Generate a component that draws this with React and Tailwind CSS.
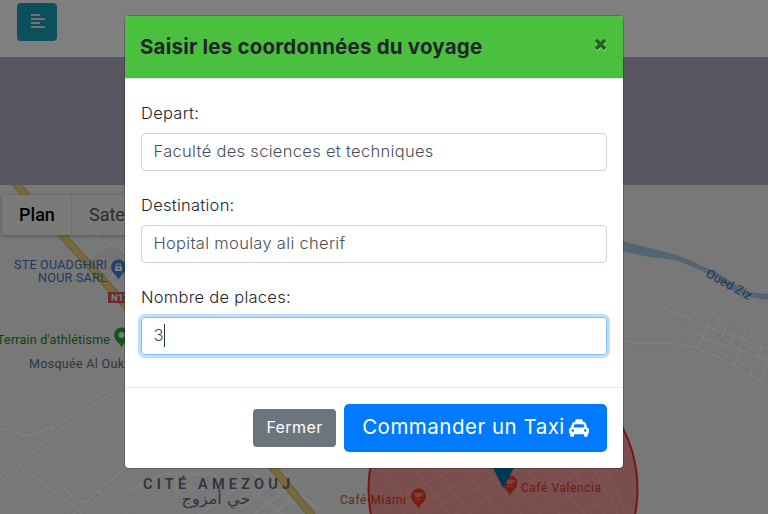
import { FaTaxi } from "react-icons/fa";

function Pin({ x, y, color, children }) {
  return (
    <g transform={`translate(${x} ${y})`}>
      <path d="M0 11C-1 6 -7.5 4 -7.5 -2A7.5 7.5 0 0 1 7.5 -2C7.5 4 1 6 0 11Z" fill={color} />
      {children}
    </g>
  );
}

function Cup() {
  return (
    <g fill="none" stroke="#f3c9b8" strokeWidth="1.1">
      <path d="M-3 -5H2V-3A2 2 0 0 1 0 -1H-1A2 2 0 0 1 -3 -3Z" fill="#f3c9b8" />
      <path d="M2 -4.5H4V-2.5H2M-3.5 1.5H3" />
    </g>
  );
}

const streets = [
  "M0 428L27 436L54 427L125 386",
  "M54 427L46 440L19 466L0 483",
  "M19 466L76 508L84 516",
  "M72 516L98 491L128 465",
  "M98 491L130 516",
  "M64 489L72 496L84 502",
  "M93 185L84 200",
  "M97 233V240L108 241L125 252",
  "M108 280L125 266",
];

const eastStreets = [
  "M623 340L635 343H675L697 348L718 357L735 366L768 385",
  "M664 308L690 319L715 330L745 340L768 350",
  "M688 305L678 326",
  "M696 309L687 330L715 343L745 351L768 361",
  "M716 308L697 349",
  "M722 314L712 338",
  "M730 318L721 338",
  "M739 321L728 347",
  "M747 324L735 364",
  "M762 345L750 374",
  "M768 360L761 380",
];

const southStreets = [
  "M168 474H215V488M176 472V500M190 472V492M203 472V490M170 488H205",
  "M240 508L284 474M252 516L297 480M270 516L305 490M255 474L312 516M245 486L285 516M262 468L318 508",
  "M125 492L168 472M200 514L240 485",
];

const circleStreets = [
  "M378 465L418 514M400 450L450 514M425 455L470 514",
  "M385 505L470 460M402 514L492 465M425 514L500 475M455 514L520 482",
  "M460 466L500 514M480 462L522 514M510 480L540 514M528 470L560 514",
  "M550 475L585 514M570 468L605 514M590 462L618 514M605 468L627 514",
  "M530 498L585 470M540 514L605 478M575 514L622 492",
];

function MapView() {
  return (
    <svg className="block h-[329px] w-full font-[Roboto]" viewBox="0 185 768 329">
      <defs>
        <clipPath id="zone">
          <circle cx="503" cy="489" r="135" />
        </clipPath>
      </defs>
      <rect y="185" width="768" height="329" fill="#f0f0f0" />
      <path d="M88 264Q100 245 125 248V278L108 282Z" fill="#e9e9e9" />
      <g fill="none" stroke="#e4e4e4" strokeWidth="4.4" strokeLinejoin="round" strokeLinecap="round">
        {streets.concat(eastStreets).map((d) => <path key={d} d={d} />)}
      </g>
      <g fill="none" stroke="#ffffff" strokeWidth="3" strokeLinejoin="round" strokeLinecap="round">
        {streets.concat(eastStreets, southStreets).map((d) => <path key={d} d={d} strokeOpacity=".75" />)}
      </g>
      <g fill="none">
        <path d="M14 182L90 266L130 310" stroke="#d3bd72" strokeWidth="8" />
        <path d="M14 182L90 266L130 310" stroke="#f0d47a" strokeWidth="5.5" />
        <path d="M268 462L314 518" stroke="#d3bd72" strokeWidth="8" />
        <path d="M268 462L314 518" stroke="#f0d47a" strokeWidth="5.5" />
      </g>
      <path d="M620 240.500L650 248L680 256Q691 260 702 266L720 274L736 285L750 292L768 294V300L748 297L730 289L718 278L706 273Q690 265 675 260L650 257L620 251Z" fill="#a4cbe6" />
      <g clipPath="url(#zone)">
        <rect x="365" y="350" width="275" height="164" fill="#f0f0f0" />
        <g fill="none" stroke="#ffffff" strokeWidth="3" strokeOpacity=".7">
          {circleStreets.map((d) => <path key={d} d={d} />)}
        </g>
      </g>
      <g fontSize="12" fill="#bf5a2c">
        <text x="340" y="504" textLength="66">Café Miami</text>
        <text x="521" y="491.500" textLength="80">Café Valencia</text>
      </g>
      <Pin x={418.500} y={498} color="#dd6036"><Cup /></Pin>
      <Pin x={510} y={485} color="#dd6036"><Cup /></Pin>
      <circle cx="503" cy="489" r="134.500" fill="#ff0000" fillOpacity=".35" stroke="#f40d0d" strokeWidth="2" strokeOpacity=".85" />
      <path d="M492 466H515L503 488Z" fill="#0072ae" />

      <g fontSize="12.500" fill="#4270b0">
        <text x="14" y="269" textLength="93">STE OUADGHIRI</text>
        <text x="38" y="282" textLength="69">NOUR SARL</text>
      </g>
      <Pin x={118.500} y={269} color="#3c82dc">
        <path d="M-3.500 -2.500H3.500V2H-3.500Z" fill="#fff" />
        <path d="M-1.800 -2.500V-5H1.800V-2.500" fill="none" stroke="#fff" strokeWidth="1.200" />
        <path d="M-1.500 -0.500H1.500" stroke="#3c82dc" />
      </Pin>
      <rect x="108" y="292" width="25" height="11" fill="#d75358" />
      <text x="111" y="301" fontSize="9.500" fontWeight="700" fill="#fff">N13</text>
      <text x="-3" y="343.500" fontSize="12.500" fill="#258225" textLength="113">Terrain d'athlétisme</text>
      <Pin x={121.500} y={337} color="#35a035"><circle cy="-2" r="3" fill="#f2f2f2" /></Pin>
      <text x="29" y="367.500" fontSize="12.500" fill="#5c7080" textLength="95">Mosquée Al Ouk</text>
      <text x="143" y="489" fontSize="14.500" fontWeight="600" fill="#5c6a7c" textLength="147">CITÉ AMEZOUJ</text>
      <text x="216" y="504" fontSize="15" fill="#5c6a7c" textAnchor="middle" className="font-['DejaVu_Sans']" direction="rtl" textLength="69" lengthAdjust="spacingAndGlyphs">حي أمزوج</text>
      <text transform="translate(705 276) rotate(29)" fontSize="12.500" fill="#3c6cab" textLength="50">Oued Ziz</text>
    </svg>
  );
}

function Field({ label, value, focused }) {
  return (
    <div className="mb-[22px] flex flex-col text-[16.5px] leading-6">
      <label className="mb-2 h-6 text-[#212529]">
        <span className="tracking-[0.26px]">{label}</span>
      </label>
      <div
        className={
          focused
            ? "flex h-[38px] items-center rounded border border-[#80bdff] px-[11.5px] pb-[2px] text-[#495057] ring-[3px] ring-[#bfdeff]"
            : "flex h-[38px] items-center rounded border border-[#ced4da] px-[11.5px] pb-[2px] text-[#495057]"
        }
      >
        <span className="tracking-[0.31px]">{value}</span>
        {focused && <span className="h-[23px] w-px bg-[#333]" />}
      </div>
    </div>
  );
}

export default function App() {
  return (
    <div className="relative h-[514px] w-[768px] overflow-hidden bg-white font-[Inter,sans-serif]">
      <header className="flex h-[57px] items-start bg-white pl-[17px] pt-[3px]">
        <button className="flex h-[38px] w-10 items-center justify-center rounded bg-[#17a2b8] text-[#e8e8e8]">
          <svg className="mb-[2px] ml-[1px] h-4 w-[14px]" viewBox="0 0 14 16" fill="currentColor">
            <path d="M0 1H9V3H0ZM0 5H14V7H0ZM0 9H9V11H0ZM0 13H14V15H0Z" />
          </svg>
        </button>
      </header>
      <section className="h-32 bg-[#b4acc2]" />
      <div className="relative">
        <MapView />
        <div className="absolute left-[2px] top-[10px] flex h-10 font-[Roboto] text-[18px] leading-10 shadow-[0_1px_4px_rgba(0,0,0,0.3)]">
          <div className="w-[69px] bg-[#f5f5f5] pl-[1px] text-center font-medium text-black">Plan</div>
          <div className="w-[100px] border-l border-[#ddd] bg-[#f5f5f5] pl-[17px] text-[#565656]">Satellite</div>
        </div>
      </div>
      <div className="absolute inset-0 bg-black/50" />
      <div className="absolute left-[124px] top-[15px] flex h-[454px] w-[500px] flex-col overflow-hidden rounded-[5px] border border-black/20 bg-white bg-clip-padding">
        <div className="flex h-[63px] shrink-0 items-start justify-between border-b border-[#dee2e6] bg-[#4bc03e] pl-[15px] pr-4 pt-4">
          <h5 className="text-[20.5px] font-bold leading-[30px] text-[#212529]">
            <span className="tracking-[0.2px]">Saisir les coordonnées du voyage</span>
          </h5>
          <svg className="mt-[6px] h-[13px] w-[13px]" viewBox="0 0 13 13" fill="none" strokeWidth="3.600">
            <path d="M2 3L11 12M11 3L2 12" stroke="#a5dfa0" />
            <path d="M2 2L11 11M11 2L2 11" stroke="#256020" />
          </svg>
        </div>
        <div className="flex h-[308px] shrink-0 flex-col px-4 pt-[22px] font-light">
          <Field label="Depart:" value="Faculté des sciences et techniques" />
          <Field label="Destination:" value="Hopital moulay ali cherif" />
          <Field label="Nombre de places:" value="3" focused />
        </div>
        <div className="flex flex-1 items-center justify-end gap-2 border-t border-[#e9ecef] pb-[1px] pr-4">
          <button className="flex h-[38px] w-[83px] items-center justify-center rounded bg-[#6c757d] pb-[1px] text-[16px] text-white">
            <span className="tracking-[0.4px]">Fermer</span>
          </button>
          <button className="flex h-12 w-[263px] items-center justify-center gap-1 rounded-[5px] bg-[#007bff] text-[20.5px] text-white">
            <span className="tracking-[0.5px]">Commander un Taxi</span>
            <FaTaxi size={20} />
          </button>
        </div>
      </div>
    </div>
  );
}
